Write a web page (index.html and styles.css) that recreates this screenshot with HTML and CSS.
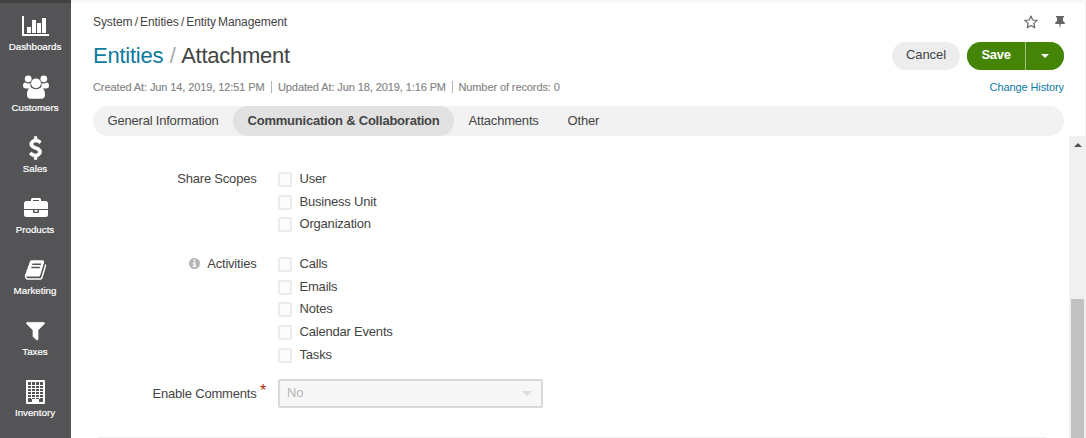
FILE: index.html
```html
<!DOCTYPE html>
<html lang="en">
<head>
<meta charset="utf-8">
<title>Entities / Attachment</title>
<link rel="stylesheet" href="styles.css">
</head>
<body>
<div class="app">
  <nav class="sidebar">
    <a class="nav-item"><svg width="27" height="24" viewBox="0 0 27 24"><path d="M0 2h2v18h25v2H0zM5 13h4v6H5zM10 6h4v13h-4zM15 9h4v10h-4zM20 4h4v15h-4z"/></svg><span>Dashboards</span></a>
    <a class="nav-item"><svg width="26" height="24" viewBox="0 0 26 24"><circle cx="5.2" cy="3.8" r="3.4"/><circle cx="20.8" cy="3.8" r="3.4"/><path d="M2.3 7.5c2 1.2 3.8 1.2 5.3.4-.5 2.8.1 4.2 1 5.600H3C1 13.500 0 12.600 0 11c0-2 .7-3.700 2.300-3.500zM23.700 7.500c-2 1.200-3.800 1.200-5.300.4.5 2.800-.1 4.200-1 5.600H23c2 0 3-.9 3-2.500 0-2-.7-3.700-2.300-3.500z"/><circle cx="13" cy="8.300" r="4.900"/><path d="M8.600 12.800c3 2 5.800 2 8.800 0 3.300-.4 4.600 3.200 4.600 7.200 0 2.500-1.400 3.700-3.700 3.700H7.700C5.400 23.700 4 22.500 4 20c0-4 1.300-7.600 4.600-7.200z"/></svg><span>Customers</span></a>
    <a class="nav-item"><svg width="23" height="24" viewBox="0 0 1792 1792"><path stroke="#fff" stroke-width="55" d="M1362 1185q0 153-99.5 263.5t-258.5 136.5v175q0 14-9 23t-23 9h-135q-13 0-22.5-9.5t-9.5-22.5v-175q-66-9-127.5-31t-101.5-44.5-74-48-46.5-37.5-17.5-18q-17-21-2-41l103-135q7-10 23-12 15-2 24 9l2 2q113 99 243 125 37 8 74 8 81 0 142.500-43t61.500-122q0-28-15-53t-33.500-42-58.500-37.500-66-32-80-32.500q-39-16-61.500-25t-61.500-26.500-62.500-31-56.500-35.500-53.500-42.500-43.500-49-35.500-58-21-66.500-8.500-78q0-138 98-242t255-134v-180q0-13 9.500-22.500t22.500-9.500h135q14 0 23 9t9 23v176q57 6 110.500 23t87 33.500 63.500 37.500 39 29 15 14q17 18 5 38l-81 146q-8 15-23 16-14 3-27-7-3-3-14.500-12t-39-26.500-58.500-32-74.500-26-85.500-11.500q-95 0-155 43t-60 111q0 26 8.500 48t29.500 41.500 39.500 33 56 31 60.500 27 70 27.500q53 20 81 31.500t76 35 75.500 42.500 62 50 53 63.500 31.500 76.500 13 94z"/></svg><span>Sales</span></a>
    <a class="nav-item"><svg width="24" height="24" viewBox="0 0 24 24"><path fill-rule="evenodd" d="M7 5V2.500Q7 1 8.500 1h7Q17 1 17 2.500V4h4.500Q24 4 24 6.500V12H0V6.500Q0 4 2.500 4H7zM9 4h6V3H9zM0 13h9v2.200q0 .8.800.8h4.400q.8 0 .8-.8V13h9v4.500Q24 20 21.500 20h-19Q0 20 0 17.500zM10.500 13h3v1.800h-3z"/></svg><span>Products</span></a>
    <a class="nav-item"><svg width="23" height="24" viewBox="0 0 1792 1792"><path d="M1703 478q40 57 18 129l-275 906q-19 64-76.500 107.500t-122.500 43.500h-923q-77 0-148.500-53.500t-99.500-131.500q-24-67-2-127 0-4 3-27t4-37q1-8-3-21.500t-3-19.500q2-11 8-21t16.500-23.500 16.500-23.500q23-38 45-91.500t30-91.500q3-10 .5-30t-.5-28q3-11 17-28t17-23q21-36 42-92t25-90q1-9-2.500-32t.5-28q4-13 22-30.500t22-22.500q19-26 42.500-84.500t27.500-96.500q1-8-3-25.500t-2-26.500q2-8 9-18t18-23 17-21q8-12 16.500-30.500t15-35 16-36 19.500-32 26.500-23.500 36-11.500 47.500 5.500l-1 3q38-9 51-9h761q74 0 114 56t18 130l-274 906q-36 119-71.500 153.500t-128.500 34.500h-869q-27 0-38 15-11 16-1 43 24 70 144 70h923q29 0 56-15.500t35-41.500l300-987q7-22 5-57 38 15 59 43zm-1064 2q-4 13 2 22.500t20 9.500h608q13 0 25.500-9.500t16.500-22.500l21-64q4-13-2-22.500t-20-9.500h-608q-13 0-25.500 9.500t-16.500 22.500zm-83 256q-4 13 2 22.500t20 9.500h608q13 0 25.500-9.500t16.500-22.500l21-64q4-13-2-22.500t-20-9.500h-608q-13 0-25.500 9.500t-16.500 22.500z"/></svg><span>Marketing</span></a>
    <a class="nav-item"><svg width="23" height="24" viewBox="0 0 1792 1792"><path stroke="#fff" stroke-width="60" d="M1595 265q17 41-14 70l-493 493v702q0 42-39 59-13 5-25 5-27 0-45-19l-256-226q-19-19-19-45v-476l-493-493q-31-29-14-70 17-39 59-39h1280q42 0 59 39z"/></svg><span>Taxes</span></a>
    <a class="nav-item"><svg width="19" height="24" viewBox="0 0 19 24"><path fill-rule="evenodd" d="M1 0h17q1 0 1 1v22q0 1-1 1H1q-1 0-1-1V1q0-1 1-1zM2 2v20h4v-3h7v3h4V2z"/><path d="M2 5.500h15M2 8.500h15M2 11.500h15M2 14.500h15M2 17.500h15M5.500 2v17M9.500 2v17M13.500 2v17" fill="none" stroke="#fff" stroke-width="1"/></svg><span>Inventory</span></a>
  </nav>
  <main class="main">
    <header class="header">
      <div class="row crumbs-row">
        <div class="crumbs">System / Entities / Entity Management</div>
        <div class="tools">
          <svg width="14" height="14" viewBox="0 0 14 14"><path d="M7 1l1.700 4 4.500.4-3.400 3 1 4.400L7 10.500l-3.800 2.300 1-4.400L.8 5.400 5.300 5z" fill="none" stroke="#666" stroke-width="1.200" stroke-linejoin="round"/></svg>
          <svg width="10" height="14" viewBox="0 0 10 14"><path d="M1 1h8v1.500H8V6q2 1 2 3H5.700L5 13.500 4.300 9H0q0-2 2-3V2.500H1z" fill="#666"/></svg>
        </div>
      </div>
      <div class="row title-row">
        <h1 class="title"><a class="title-link">Entities</a> <i class="slash">/</i> Attachment</h1>
        <div class="actions">
          <button class="btn cancel">Cancel</button>
          <div class="split"><button class="btn save">Save</button><button class="btn toggle"><svg width="8" height="4" viewBox="0 0 8 4"><path d="M0 0h8L4 4z" fill="#fff"/></svg></button></div>
        </div>
      </div>
      <div class="row meta-row">
        <div class="meta"><span>Created At: Jun 14, 2019, 12:51 PM</span><span>Updated At: Jun 18, 2019, 1:16 PM</span><span class="records">Number of records: 0</span></div>
        <a class="history">Change History</a>
      </div>
      <div class="tabs"><a class="tab">General Information</a><a class="tab active">Communication &amp; Collaboration</a><a class="tab">Attachments</a><a class="tab">Other</a></div>
    </header>
    <div class="body">
      <form class="form">
        <div class="field scopes">
          <div class="label">Share Scopes</div>
          <div class="choices">
            <label class="choice"><i class="box"></i>User</label>
            <label class="choice"><i class="box"></i>Business Unit</label>
            <label class="choice"><i class="box"></i>Organization</label>
          </div>
        </div>
        <div class="field activities">
          <div class="label"><svg class="info" width="11" height="11" viewBox="0 0 11 11"><circle cx="5.500" cy="5.500" r="5.500" fill="#b5b5b5"/><path d="M4.500 1.700h2v1.500h-2zM3.800 4.300h2.700v3.600h.8V9H3.700V7.900h.9V5.400h-.8z" fill="#fff"/></svg>Activities</div>
          <div class="choices">
            <label class="choice"><i class="box"></i>Calls</label>
            <label class="choice"><i class="box"></i>Emails</label>
            <label class="choice"><i class="box"></i>Notes</label>
            <label class="choice"><i class="box"></i>Calendar Events</label>
            <label class="choice"><i class="box"></i>Tasks</label>
          </div>
        </div>
        <div class="field comments">
          <div class="label">Enable Comments<em class="required">*</em></div>
          <div class="select"><span>No</span><svg width="10" height="5" viewBox="0 0 10 5"><path d="M0 0h10L5 5z" fill="#dcdcdc"/></svg></div>
        </div>
        <hr class="divider">
      </form>
      <div class="scrollbar"><svg width="8" height="4" viewBox="0 0 8 4"><path d="M4 0l4 4H0z" fill="#505050"/></svg><div class="thumb"></div></div>
    </div>
  </main>
</div>
</body>
</html>
```
FILE: styles.css
```css
* { box-sizing: border-box; }
body { margin: 0; font-family: "Liberation Sans", Arial, sans-serif; font-size: 13px; line-height: 18px; letter-spacing: -.2px; color: #444; background: #fff; }
.app { display: flex; width: 1086px; height: 438px; overflow: hidden; }
.sidebar { width: 71px; flex: none; background: #545456; border-top: 3px solid #414141; padding-top: 11px; letter-spacing: 0; }
.nav-item { height: 61px; display: flex; flex-direction: column; align-items: center; color: #fff; font-size: 9.75px; line-height: 14px; gap: 2px; -webkit-text-stroke: .2px #fff; }
.nav-item svg { fill: #fff; display: block; }
.nav-item span { margin-left: -1px; }
.main { flex: 1; min-width: 0; border-top: 3px solid #f7f7f7; border-right: 1px solid #f0f0f0; display: flex; flex-direction: column; }
.header { padding: 9px 21px 0 22px; height: 133px; }
.row { display: flex; justify-content: space-between; align-items: center; }
.crumbs-row { height: 20px; }
.crumbs { font-size: 12px; letter-spacing: -.1px; word-spacing: -1px; }
.tools { display: flex; gap: 17px; align-items: center; margin-right: -1px; }
.tools svg { display: block; }
.title-row { height: 47px; }
.title { margin: 0; font-size: 22px; line-height: 30px; font-weight: 400; letter-spacing: -.25px; word-spacing: .8px; }
.title-link { color: #0d7a9e; }
.slash { color: #aaa; font-style: normal; }
.actions { display: flex; gap: 7px; }
.btn { border: 0; padding: 0; margin: 0; height: 28px; font: 13px/26px "Liberation Sans", Arial, sans-serif; color: #444; letter-spacing: -.1px; }
.cancel { width: 68px; padding-bottom: 2px; border-radius: 14px; background: #ededed; }
.split { display: flex; gap: 1px; border-radius: 14px; overflow: hidden; background: #a3c483; }
.save { width: 58px; padding-bottom: 2px; background: #448406; color: #fff; font-weight: 700; letter-spacing: -.3px; }
.toggle { width: 38px; background: #448406; display: flex; align-items: center; justify-content: center; }
.meta-row { height: 15px; font-size: 11px; letter-spacing: -.1px; }
.meta { display: flex; color: #858585; line-height: 12px; -webkit-text-stroke: .15px #858585; }
.meta span + span { border-left: 1px solid #b5b5b5; padding-left: 6px; margin-left: 6.500px; }
.meta .records { padding-left: 5px; }
.history { color: #0d7a9e; }
.tabs { height: 30px; margin-top: 12px; border-radius: 15px; background: #f2f2f2; display: flex; line-height: 29px; }
.tab { padding: 0 14.500px; }
.active { background: #e1e1e1; border-radius: 15px; font-weight: 700; letter-spacing: -.23px; }
.body { flex: 1; display: flex; }
.form { flex: 1; padding: 32px 23px 0 22px; }
.field { display: grid; grid-template-columns: 163.500px 1fr; column-gap: 21.500px; }
.label { text-align: right; }
.choices { display: grid; grid-auto-rows: 22.700px; }
.choice { display: flex; align-items: flex-start; }
.box { width: 14px; height: 15px; margin: 2px 7.500px 0 0; border: 2px solid #ebebeb; border-radius: 2px; background: #fcfcfc; }
.scopes { padding-top: 2px; height: 87px; }
.activities { height: 124px; }
.info { margin-right: 7px; vertical-align: -1px; }
.comments { height: 29px; }
.comments .label { line-height: 29px; position: relative; }
.required { position: absolute; left: 167px; top: -3px; color: #b32a00; font-style: normal; font-size: 16px; }
.select { width: 265px; height: 29px; border: 2px solid #d9d9d9; border-radius: 2px; background: #f7f7f7; color: #b5b5b5; padding: 0 9px 2px 7px; display: flex; align-items: center; justify-content: space-between; }
.select svg { margin-top: 2px; }
.divider { border: 0; height: 1px; background: #f0f0f0; margin: 29px 0 0 4px; }
.scrollbar { width: 16px; background: #f0f0f0; padding: 7px 1px 0 2px; }
.scrollbar svg { display: block; margin: 0 auto; }
.thumb { height: 139px; margin-top: 152px; background: #c1c1c1; }
```
